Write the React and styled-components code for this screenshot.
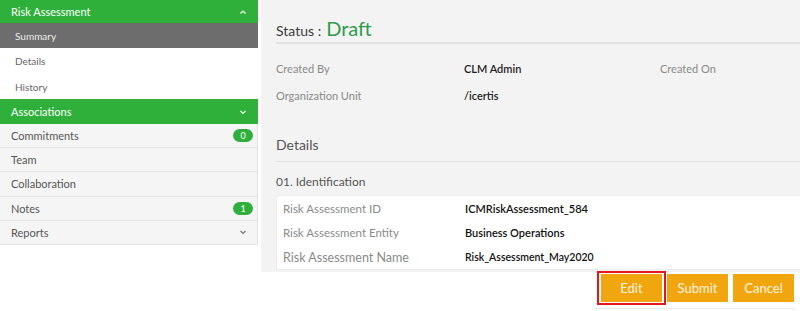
import React from 'react';
import styled, { createGlobalStyle } from 'styled-components';

const Global = createGlobalStyle`
  html, body { margin: 0; padding: 0; background: #fff; }
  body {
    font-family: Lato, "Open Sans", sans-serif;
    width: 800px; height: 311px; overflow: hidden;
  }
  * { box-sizing: border-box; }
`;

const Page = styled.div`
  display: flex;
  align-items: flex-start;
  width: 800px;
  height: 311px;
`;

const Sidebar = styled.nav`
  width: 258px;
  flex: none;
  margin-right: 3px;
  display: flex;
  flex-direction: column;
`;

const GroupHeader = styled.div`
  height: ${p => p.$h}px;
  background: #2fb03b;
  color: #fff;
  display: flex;
  align-items: center;
  justify-content: space-between;
  padding: 0 11px 0 11px;
  font-size: 11px;
`;

const SubItem = styled.div`
  height: ${p => p.$h}px;
  display: flex;
  align-items: center;
  padding-left: 15px;
  font-size: 10px;
  background: ${p => (p.$active ? '#6d6d6d' : '#fff')};
  color: ${p => (p.$active ? '#ececec' : '#666')};
`;

const AssocItem = styled.div`
  height: 24.2px;
  border-bottom: 1px solid #e2e2e2;
  border-right: 1px solid #e2e2e2;
  background: #f5f5f5;
  display: flex;
  align-items: center;
  justify-content: space-between;
  padding: 0 4px 0 11px;
  font-size: 11px;
  color: #555;
`;

const Badge = styled.span`
  width: 20px;
  height: 13px;
  border-radius: 7px;
  background: #2fae3b;
  color: #fff;
  font-size: 9px;
  display: flex;
  align-items: center;
  justify-content: center;
`;

const ChevronBox = styled.span`
  display: flex;
  width: 8px;
  margin-right: ${p => p.$mr || 0}px;
  color: ${p => p.$color};
`;

const Chevron = ({ up, color = '#fff', mr }) => (
  <ChevronBox $color={color} $mr={mr}>
    <svg width="8" height="6" viewBox="0 0 8 6">
      <polyline
        points={up ? '1.5,4.5 4,2 6.5,4.5' : '1.5,2 4,4.5 6.5,2'}
        fill="none"
        stroke="currentColor"
        strokeWidth="1.2"
      />
    </svg>
  </ChevronBox>
);

const Main = styled.main`
  flex: 1;
  display: flex;
  flex-direction: column;
`;

const Panel = styled.section`
  background: #f3f3f3;
  height: 272px;
  padding-left: 15px;
  display: flex;
  flex-direction: column;
`;

const StatusRow = styled.div`
  height: 44px;
  padding-top: 16px;
  border-bottom: 2px solid #e2e2e2;
  display: flex;
  align-items: baseline;
  gap: 5px;
`;

const StatusLabel = styled.span`
  font-size: 14px;
  color: #3c3c3c;
`;

const StatusValue = styled.span`
  font-size: 20px;
  line-height: 24px;
  color: #2e9c48;
`;

const InfoGrid = styled.div`
  margin-top: 11px;
  display: grid;
  grid-template-columns: 188px 196px 1fr;
  grid-auto-rows: 27px;
  align-items: center;
  font-size: 11px;
`;

const InfoLabel = styled.span`
  color: #8a8a8a;
`;

const InfoValue = styled.span`
  color: #1e1e1e;
  font-weight: 600;
`;

const SectionTitle = styled.div`
  height: 53px;
  padding-top: 27px;
  line-height: 18px;
  font-size: 14px;
  color: #555;
  border-bottom: 1px solid #e2e2e2;
`;

const SubTitle = styled.div`
  margin-top: 12px;
  line-height: 16px;
  font-size: 12px;
  color: #555;
`;

const Card = styled.div`
  margin-top: 5px;
  background: #fff;
  border: 1px solid #ebebeb;
  border-right: none;
  padding: 0 6px;
  display: flex;
  flex-direction: column;
`;

const FieldRow = styled.div`
  height: ${p => p.$h}px;
  display: grid;
  grid-template-columns: 182px 1fr;
  align-items: center;
`;

const FieldLabel = styled.span`
  color: #8a8a8a;
  font-size: ${p => p.$size || 11.5}px;
`;

const FieldValue = styled.span`
  color: #111;
  font-weight: 600;
  font-size: ${p => p.$size || 11}px;
`;

const ActionBar = styled.div`
  display: flex;
  justify-content: flex-end;
  padding-right: 6px;
`;

const ActionGroup = styled.div`
  margin-top: -1px;
  display: flex;
  align-items: center;
  gap: 5px;
  padding: 0 0 3px 1px;
  border-bottom: 1px solid #e8e8e8;
`;

const Highlight = styled.div`
  border: 2px solid #e6161d;
  padding: 1px 2px;
  margin-right: -4px;
  display: flex;
`;

const ActionButton = styled.button`
  height: 28px;
  width: 61px;
  padding: 0;
  border: none;
  background: #f1a50e;
  color: #fff6e0;
  font-family: inherit;
  font-size: 13px;
`;

const assoc = [
  { name: 'Commitments', badge: '0' },
  { name: 'Team' },
  { name: 'Collaboration' },
  { name: 'Notes', badge: '1' },
  { name: 'Reports', chevron: true },
];

export default function App() {
  return (
    <>
      <Global />
      <Page>
        <Sidebar>
          <GroupHeader $h={23}>
            <span>Risk Assessment</span>
            <Chevron up />
          </GroupHeader>
          <SubItem $h={25} $active>Summary</SubItem>
          <SubItem $h={26}>Details</SubItem>
          <SubItem $h={25}>History</SubItem>
          <GroupHeader $h={25}>
            <span>Associations</span>
            <Chevron />
          </GroupHeader>
          {assoc.map(a => (
            <AssocItem key={a.name}>
              <span>{a.name}</span>
              {a.badge && <Badge>{a.badge}</Badge>}
              {a.chevron && <Chevron color="#777" mr={6} />}
            </AssocItem>
          ))}
        </Sidebar>
        <Main>
          <Panel>
            <StatusRow>
              <StatusLabel>Status :</StatusLabel>
              <StatusValue>Draft</StatusValue>
            </StatusRow>
            <InfoGrid>
              <InfoLabel>Created By</InfoLabel>
              <InfoValue>CLM Admin</InfoValue>
              <InfoLabel>Created On</InfoLabel>
              <InfoLabel>Organization Unit</InfoLabel>
              <InfoValue>/icertis</InfoValue>
              <span />
            </InfoGrid>
            <SectionTitle>Details</SectionTitle>
            <SubTitle>01. Identification</SubTitle>
            <Card>
              <FieldRow $h={24}>
                <FieldLabel>Risk Assessment ID</FieldLabel>
                <FieldValue>ICMRiskAssessment_584</FieldValue>
              </FieldRow>
              <FieldRow $h={25}>
                <FieldLabel>Risk Assessment Entity</FieldLabel>
                <FieldValue>Business Operations</FieldValue>
              </FieldRow>
              <FieldRow $h={24}>
                <FieldLabel $size={12.5}>Risk Assessment Name</FieldLabel>
                <FieldValue $size={10.5}>Risk_Assessment_May2020</FieldValue>
              </FieldRow>
            </Card>
          </Panel>
          <ActionBar>
            <ActionGroup>
              <Highlight>
                <ActionButton>Edit</ActionButton>
              </Highlight>
              <ActionButton>Submit</ActionButton>
              <ActionButton>Cancel</ActionButton>
            </ActionGroup>
          </ActionBar>
        </Main>
      </Page>
    </>
  );
}
